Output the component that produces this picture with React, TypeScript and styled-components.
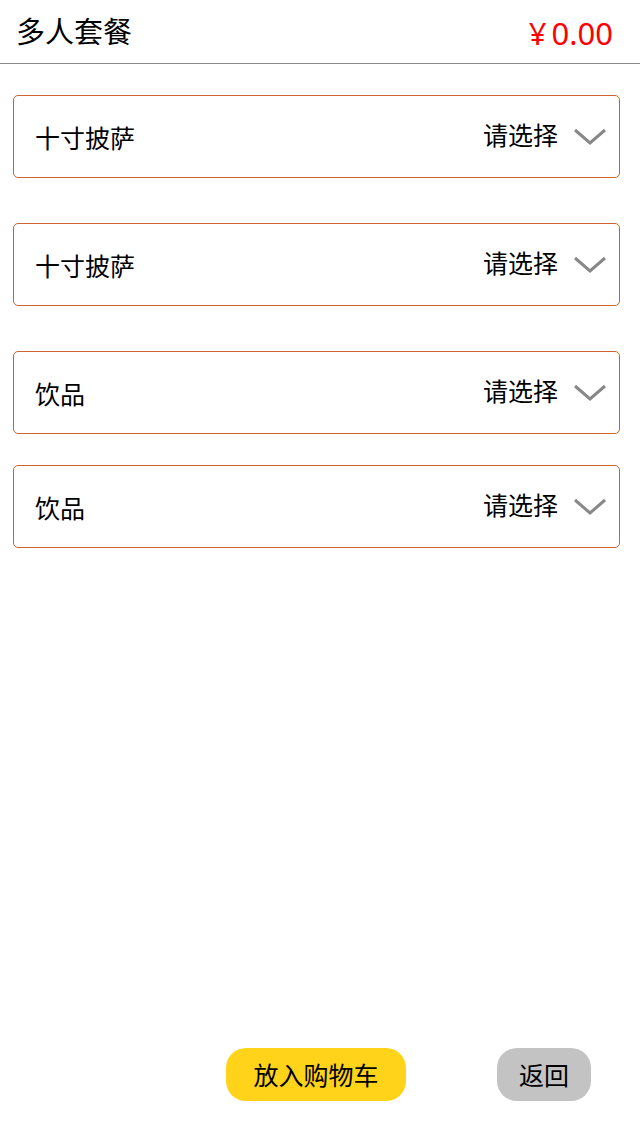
import React from "react";
import styled, { createGlobalStyle } from "styled-components";

const GlobalStyle = createGlobalStyle`
  html, body {
    margin: 0;
    padding: 0;
    background: #fff;
  }
  body {
    font-family: "Noto Sans CJK SC", "Noto Sans", sans-serif;
    color: #000;
  }
`;

const Page = styled.div`
  display: flex;
  flex-direction: column;
  min-height: 100vh;
`;

const Header = styled.header`
  display: flex;
  align-items: center;
  justify-content: space-between;
  height: 63px;
  padding: 0 27px 0 16px;
  border-bottom: 1px solid #8a8a8a;
`;

const Title = styled.h1`
  margin: 0;
  font-size: 29px;
  font-weight: 400;
  line-height: 1;
  margin-top: -2px;
`;

const Price = styled.span`
  color: #ff0000;
  font-family: "Noto Sans", "Noto Sans CJK SC", sans-serif;
  font-size: 31px;
  line-height: 1;
  margin-top: 4px;
`;

const Yen = styled.span`
  margin-right: 5px;
`;

const List = styled.div`
  display: flex;
  flex-direction: column;
  padding: 0 20px 0 13px;
`;

const Option = styled.div<{ $top: number }>`
  display: flex;
  align-items: center;
  height: 81px;
  margin-top: ${(p) => p.$top}px;
  padding: 0 13px 0 21px;
  border: 1px solid #cf632d;
  border-radius: 5px;
`;

const Label = styled.span`
  flex: 1;
  font-size: 25px;
  line-height: 1;
  margin-top: 2px;
`;

const Placeholder = styled.span`
  font-size: 25px;
  line-height: 1;
  margin-top: -4px;
  margin-right: 16px;
`;

const Footer = styled.footer`
  display: flex;
  align-items: center;
  margin-top: auto;
  padding: 0 0 33px 226px;
  gap: 91px;
`;

const Button = styled.button<{ $bg: string; $w: number }>`
  width: ${(p) => p.$w}px;
  height: 53px;
  border: none;
  border-radius: 20px;
  background: ${(p) => p.$bg};
  color: #000;
  font-family: "Noto Sans CJK SC", sans-serif;
  font-size: 25px;
  padding: 0;
  line-height: 1;
`;

const Chevron = () => (
  <svg width="32" height="20" viewBox="0 0 32 20">
    <polyline
      points="1,3 16,16 31,3"
      fill="none"
      stroke="#888"
      strokeWidth="3"
    />
  </svg>
);

const options = [
  { label: "十寸披萨", top: 31 },
  { label: "十寸披萨", top: 45 },
  { label: "饮品", top: 45 },
  { label: "饮品", top: 31 },
];

export default function App() {
  return (
    <Page>
      <GlobalStyle />
      <Header>
        <Title>多人套餐</Title>
        <Price>
          <Yen>¥</Yen>0.00
        </Price>
      </Header>
      <List>
        {options.map((o, i) => (
          <Option key={i} $top={o.top}>
            <Label>{o.label}</Label>
            <Placeholder>请选择</Placeholder>
            <Chevron />
          </Option>
        ))}
      </List>
      <Footer>
        <Button $bg="#ffd31a" $w={180}>放入购物车</Button>
        <Button $bg="#c4c3c4" $w={94}>返回</Button>
      </Footer>
    </Page>
  );
}
